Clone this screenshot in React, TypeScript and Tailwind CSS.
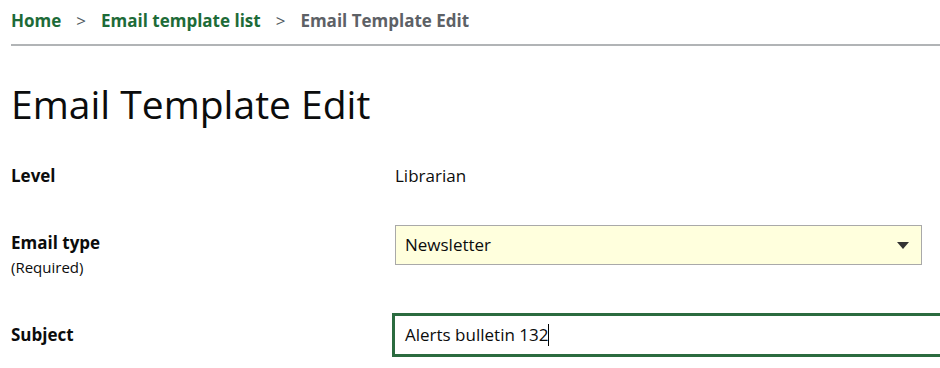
import React from "react";

export default function App() {
  return (
    <div className="w-[940px] h-[368px] overflow-hidden bg-white text-[#0b0c0c]" style={{ fontFamily: '"Open Sans", "Noto Sans", sans-serif' }}>
      <div className="pl-[11px]">
        <nav className="flex items-center h-[40px] pt-[1px] text-[17px] font-bold">
          <a className="text-[#1d6b38]">Home</a>
          <span className="mx-[15px] text-[#505a5f] font-normal">&gt;</span>
          <a className="text-[#1d6b38]">Email template list</a>
          <span className="mx-[15px] text-[#505a5f] font-normal">&gt;</span>
          <span className="text-[#5d6166]">Email Template Edit</span>
        </nav>
        <div className="h-[2px] bg-[#b1b4b6] mt-[4px]" />
        <h1 className="text-[39px] font-normal leading-[50px] mt-[33px]">Email Template Edit</h1>
        <div className="mt-[35px] flex items-center h-[24px]">
          <div className="w-[384px] shrink-0 font-bold text-[17px]">Level</div>
          <div className="text-[17px]">Librarian</div>
        </div>
        <div className="mt-[37px] flex">
          <div className="w-[384px] shrink-0 pt-[6px]">
            <div className="font-bold text-[17px] leading-[24px]">Email type</div>
            <div className="text-[15px] leading-[24px]">(Required)</div>
          </div>
          <div className="w-[527px] h-[40px] shrink-0 border border-[#a9a9a9] bg-[#ffffdd] flex items-center justify-between pl-[9px] pr-[12px] text-[17px]">
            <span>Newsletter</span>
            <svg width="12" height="7" viewBox="0 0 12 7"><path d="M0 0h12L6 7z" fill="#333" /></svg>
          </div>
        </div>
        <div className="mt-[34px] flex items-center">
          <div className="w-[381px] shrink-0 font-bold text-[17px]">Subject</div>
          <div className="w-[600px] h-[44px] border-[3px] border-[#2b6b3f] bg-white flex items-center pl-[10px] text-[17px] shrink-0">
            <span>Alerts bulletin 132</span>
            <span className="w-[1px] h-[22px] bg-black" />
          </div>
        </div>
      </div>
    </div>
  );
}
